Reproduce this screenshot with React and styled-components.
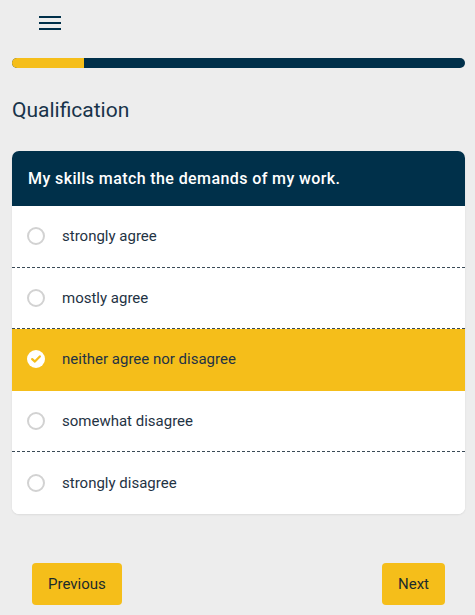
import React, { useState } from 'react'
import styled, { createGlobalStyle } from 'styled-components'

const GlobalStyle = createGlobalStyle`
  body {
    margin: 0;
    background: #ededed;
    font-family: Roboto, "Liberation Sans", Arial, sans-serif;
  }
`

const options = [
  'strongly agree',
  'mostly agree',
  'neither agree nor disagree',
  'somewhat disagree',
  'strongly disagree',
]

const App = () => {
  const [selected, setSelected] = useState(2)
  const progress = 16

  return (
    <Page>
      <GlobalStyle />
      <TopBar>
        <MenuButton aria-label="menu">
          <span />
          <span />
          <span />
        </MenuButton>
      </TopBar>

      <Progress>
        <ProgressFill style={{ width: `${progress}%` }} />
      </Progress>

      <Heading>Qualification</Heading>

      <Card>
        <Question>My skills match the demands of my work.</Question>
        {options.map((label, index) => (
          <Option
            key={label}
            $active={index === selected}
            onClick={() => setSelected(index)}
          >
            <Radio $active={index === selected}>
              {index === selected && (
                <svg width="10" height="8" viewBox="0 0 10 8">
                  <path
                    d="M1.2 4.1 L3.9 6.6 L8.8 1.4"
                    fill="none"
                    stroke="#f5be1a"
                    strokeWidth="2.2"
                    strokeLinecap="round"
                    strokeLinejoin="round"
                  />
                </svg>
              )}
            </Radio>
            <OptionLabel>{label}</OptionLabel>
          </Option>
        ))}
      </Card>

      <Footer>
        <NavButton>Previous</NavButton>
        <NavButton>Next</NavButton>
      </Footer>
    </Page>
  )
}

const Page = styled.div`
  width: 475px;
  padding: 0 10px 0 12px;
  box-sizing: border-box;
`

const TopBar = styled.div`
  height: 58px;
  padding: 16px 0 0 27px;
  box-sizing: border-box;
`

const MenuButton = styled.button`
  display: flex;
  flex-direction: column;
  gap: 4px;
  width: 22px;
  padding: 0;
  border: none;
  background: none;

  span {
    display: block;
    height: 2px;
    background: #00304a;
  }
`

const Progress = styled.div`
  height: 10px;
  border-radius: 5px;
  background: #00304a;
  overflow: hidden;
`

const ProgressFill = styled.div`
  height: 100%;
  background: #f5be1a;
`

const Heading = styled.h1`
  margin: 29px 0 0;
  height: 54px;
  font-size: 21px;
  font-weight: 400;
  line-height: 26px;
  color: #18334a;
`

const Card = styled.div`
  background: #fff;
  border-radius: 7px;
  overflow: hidden;
  box-shadow: 0 1px 2px rgba(0, 0, 0, 0.08);
`

const Question = styled.div`
  height: 55px;
  padding: 0 16px;
  display: flex;
  align-items: center;
  background: #00304a;
  color: #fff;
  font-size: 16px;
  font-weight: 500;
  letter-spacing: 0.4px;
`

const Option = styled.div`
  height: 61.6px;
  box-sizing: border-box;
  display: flex;
  align-items: center;
  padding: 0 0 0 15px;
  cursor: pointer;
  background: ${(p) => (p.$active ? '#f5be1a' : '#fff')};
  border-bottom: 1px dashed ${(p) => (p.$active ? 'transparent' : '#3a4a56')};

  &:last-child {
    border-bottom: none;
  }
`

const Radio = styled.span`
  width: 18px;
  height: 18px;
  box-sizing: border-box;
  border-radius: 50%;
  display: flex;
  align-items: center;
  justify-content: center;
  background: #fff;
  border: ${(p) => (p.$active ? 'none' : '2px solid #d2d2d2')};
  margin-right: 17px;
`

const OptionLabel = styled.span`
  font-size: 15px;
  color: #1f3344;
`

const Footer = styled.div`
  display: flex;
  justify-content: space-between;
  padding: 49px 20px 0;
`

const NavButton = styled.button`
  height: 42px;
  padding: 0 16px;
  border: none;
  border-radius: 4px;
  background: #f5be1a;
  color: #1b2b2b;
  font-family: Roboto, "Liberation Sans", Arial, sans-serif;
  font-size: 15px;
`

export default App
